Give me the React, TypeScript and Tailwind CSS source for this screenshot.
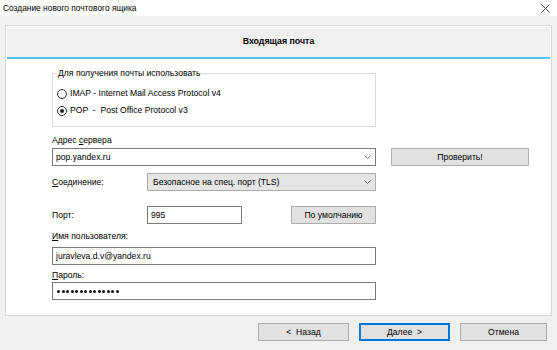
function Chevron() {
  return (
    <svg width="7" height="4" viewBox="0 0 7 4" className="shrink-0">
      <path d="M0.5 0.5 L3.5 3.5 L6.5 0.5" fill="none" stroke="#666" strokeWidth="0.9" />
    </svg>
  );
}

function Radio({ checked, label }: { checked?: boolean; label: string }) {
  return (
    <div className="flex items-center gap-[3px] h-[17px]">
      <span className="w-[10px] h-[10px] rounded-full border border-[#333] bg-white flex items-center justify-center">
        {checked && <span className="w-[4px] h-[4px] rounded-full bg-[#222]" />}
      </span>
      <span className="whitespace-pre">{label}</span>
    </div>
  );
}

function Btn({ label, className = "" }: { label: string; className?: string }) {
  return (
    <div
      className={`h-[18px] flex items-center justify-center bg-[#e1e1e1] border border-[#adadad] whitespace-pre ${className}`}
    >
      {label}
    </div>
  );
}

export default function App() {
  const dots = Array.from({ length: 14 });
  return (
    <div className="w-[557px] h-[350px] bg-[#f0f0f0] text-[8.6px] text-black font-['Liberation_Sans',Arial,sans-serif] flex flex-col overflow-hidden">
      {/* заголовок окна */}
      <div className="h-[16px] bg-white flex items-center justify-between pl-[3px] pr-[7px] shrink-0">
        <span className="text-[8.4px] leading-none">Создание нового почтового ящика</span>
        <svg width="9" height="9" viewBox="0 0 9 9">
          <path d="M0.5 0.5 L8.5 8.5 M8.5 0.5 L0.5 8.5" stroke="#333" strokeWidth="0.9" />
        </svg>
      </div>

      {/* основная панель */}
      <div className="ml-[5px] mr-[5px] mt-[9px] border border-[#dadada] bg-white p-[1px] flex flex-col">
        <div className="h-[30px] bg-[#f0f0f0] flex items-center justify-center font-bold text-[8.8px]">
          Входящая почта
        </div>
        <div className="h-[2px] bg-[#4fc3ea]" />

        <div className="h-[255px] pl-[45px] pt-[14px]">
          {/* группа выбора протокола */}
          <div className="relative w-[324px] h-[54px] border border-[#dcdcdc] pl-[4px] pt-[11px]">
            <span className="absolute -top-[7px] left-[4px] bg-white px-[1px] leading-[12px]">
              Для получения почты использовать
            </span>
            <Radio label="IMAP - Internet Mail Access Protocol v4" />
            <Radio checked label="POP  -  Post Office Protocol v3" />
          </div>

          <div className="mt-[7px] leading-[12px] h-[13px]">
            Адрес <u>с</u>ервера
          </div>
          <div className="flex items-center mt-[1px]">
            <div className="w-[324px] h-[18px] border border-[#7a7a7a] flex items-center justify-between pl-[3px] pr-[4px]">
              <span>pop.yandex.ru</span>
              <Chevron />
            </div>
            <Btn label="Проверить!" className="ml-[15px] w-[138px]" />
          </div>

          <div className="flex items-center mt-[7px]">
            <div className="w-[95px]">
              <u>С</u>оединение:
            </div>
            <div className="w-[229px] h-[18px] bg-[#e5e5e5] border border-[#acacac] flex items-center justify-between pl-[5px] pr-[4px]">
              <span>Безопасное на спец. порт (TLS)</span>
              <Chevron />
            </div>
          </div>

          <div className="flex items-center mt-[15px]">
            <div className="w-[95px]">Порт:</div>
            <div className="w-[95px] h-[18px] border border-[#7a7a7a] flex items-center pl-[3px]">995</div>
            <Btn label="По умолчанию" className="ml-[49px] w-[85px]" />
          </div>

          <div className="mt-[6px] leading-[12px] h-[13px]">
            <u>И</u>мя пользователя:
          </div>
          <div className="mt-[4px] w-[324px] h-[18px] border border-[#7a7a7a] flex items-center pl-[3px]">
            juravleva.d.v@yandex.ru
          </div>

          <div className="mt-[4px] leading-[12px] h-[13px]">
            <u>П</u>ароль:
          </div>
          <div className="mt-[0px] w-[324px] h-[18px] border border-[#7a7a7a] flex items-center gap-[1.5px] pl-[4px]">
            {dots.map((_, i) => (
              <span key={i} className="w-[3px] h-[3px] rounded-full bg-[#111]" />
            ))}
          </div>
        </div>
      </div>

      {/* кнопки */}
      <div className="flex justify-end gap-[10px] pr-[10px] mt-[7px]">
        <Btn label="<  Назад" className="w-[91px]" />
        <div className="w-[91px] h-[18px] flex items-center justify-center bg-[#e1e1e1] border-2 border-[#0078d7] whitespace-pre">
          Далее  &gt;
        </div>
        <Btn label="Отмена" className="w-[87px]" />
      </div>
    </div>
  );
}
